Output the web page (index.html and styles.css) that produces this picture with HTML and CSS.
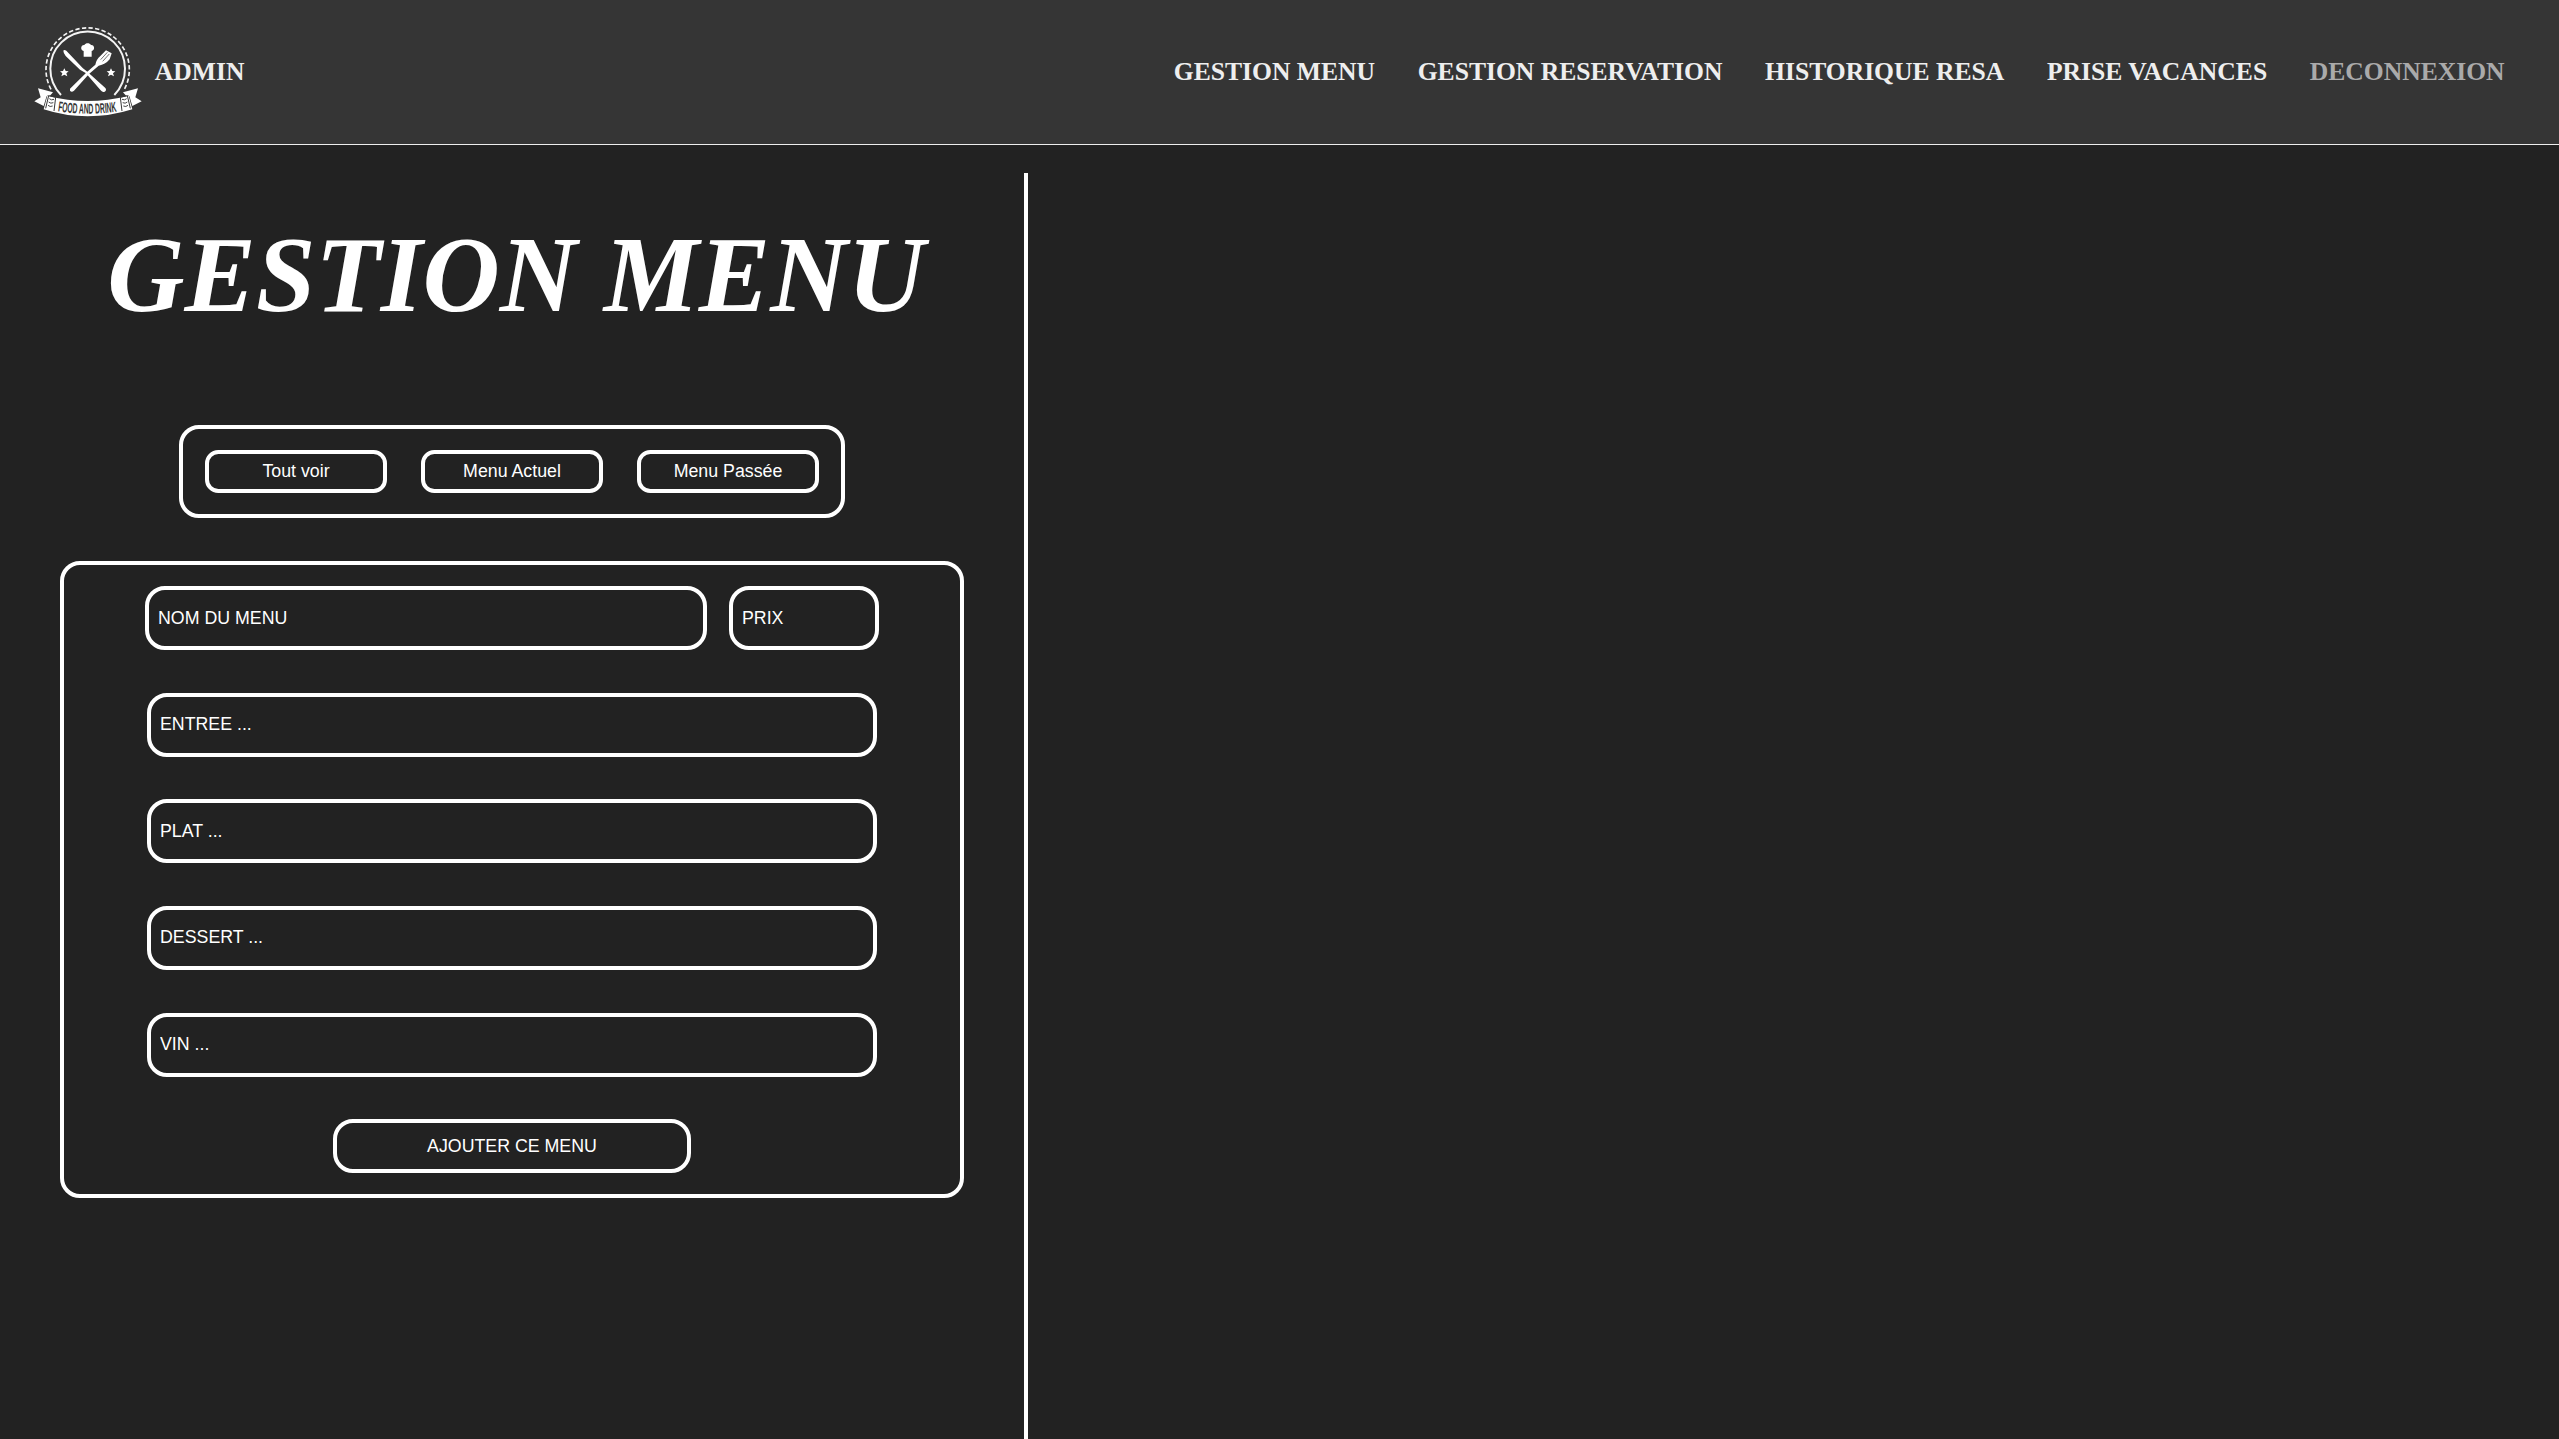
FILE: index.html
```html
<!DOCTYPE html>
<html lang="fr">
<head>
<meta charset="utf-8">
<title>Gestion menu</title>
<link rel="stylesheet" href="styles.css">
</head>
<body>
<header class="header">
  <a class="brand" href="#">
    <svg class="logo" viewBox="100 75 330 280" aria-hidden="true">
      <g fill="none" stroke="#f4f4f4">
        <path d="M154 268A125 125 0 1 1 374 268" stroke-width="5" stroke-dasharray="13 7"/>
        <path d="M184 285A112 112 0 1 1 344 285" stroke-width="6"/>
      </g>
      <g fill="#fff">
        <path d="M252 170V153C241 150 243 134 254 135C258 128 270 128 274 135C285 134 287 150 276 153V170Z"/>
        <path d="M194 205l4 8 9 1-7 6 3 9-9-5-9 5 3-9-7-6 9-1zM334 205l4 8 9 1-7 6 3 9-9-5-9 5 3-9-7-6 9-1z"/>
        <path d="M191 152Q193 148 200 152L249 204L263 215L317 264Q322 271 315 275Q309 278 303 271L258 219L241 209L198 168Q191 159 191 152Z"/>
        <path d="M211 266L262 216L287 194Q290 178 302 168L319 151L336 160L330 178Q317 194 297 197L268 222L223 272Q216 278 211 272Z"/>
      </g>
      <g fill="none" stroke="#555" stroke-width="2.5"><path d="M303 179L323 157M309 184L329 162"/></g>
      <path fill="#fff" d="M115 265L160 277L150 288Q142 284 140 291L132 318L104 304L123 292ZM415 265L370 277L380 288Q388 284 390 291L398 318L426 304L407 292Z"/>
      <path fill="#fff" d="M143 287Q204 303 264 303Q324 303 387 287L398 328Q332 349 264 349Q196 349 132 328Z"/>
      <path fill="none" stroke="#363636" stroke-width="3" d="M138 325L147 287L168 292L163 333M392 325L383 287L362 292L367 333"/>
      <path fill="none" stroke="#444" stroke-width="3" d="M149 296q6 6 14 2M147 306q6 6 14 2M145 316q6 6 14 2M381 296q-6 6-14 2M383 306q-6 6-14 2M385 316q-6 6-14 2"/>
      <path id="ribbon" fill="none" d="M174 334Q264 348 356 334"/>
      <text class="logo-text"><textPath href="#ribbon" textLength="178" lengthAdjust="spacingAndGlyphs">FOOD AND DRINK</textPath></text>
    </svg>
    <span>ADMIN</span>
  </a>
  <nav class="nav">
    <a href="#">GESTION MENU</a>
    <a href="#">GESTION RESERVATION</a>
    <a href="#">HISTORIQUE RESA</a>
    <a href="#">PRISE VACANCES</a>
    <a class="logout" href="#">DECONNEXION</a>
  </nav>
</header>
<main class="main">
  <section class="panel">
    <h1 class="title">GESTION MENU</h1>
    <div class="filters">
      <button class="filter">Tout voir</button>
      <button class="filter">Menu Actuel</button>
      <button class="filter">Menu Passée</button>
    </div>
    <form class="form">
      <div class="row">
        <input class="field name" placeholder="NOM DU MENU">
        <input class="field price" placeholder="PRIX">
      </div>
      <input class="field" placeholder="ENTREE ...">
      <input class="field" placeholder="PLAT ...">
      <input class="field" placeholder="DESSERT ...">
      <input class="field" placeholder="VIN ...">
      <button class="submit" type="button">AJOUTER CE MENU</button>
    </form>
  </section>
  <section class="results"></section>
</main>
</body>
</html>
```
FILE: styles.css
```css
* { box-sizing: border-box; }

body {
  margin: 0;
  height: 100vh;
  display: flex;
  flex-direction: column;
  overflow: hidden;
  background: #222;
  color: #fff;
  font-family: "Liberation Serif", "Times New Roman", serif;
}

.header {
  flex: none;
  height: 145px;
  display: flex;
  align-items: center;
  justify-content: space-between;
  padding: 0 54.4px 0 33.3px;
  background: #353535;
  border-bottom: 1px solid #eee;
  font-size: 25.6px;
  font-weight: bold;
}

.header a { color: #eee; text-decoration: none; }
.brand { display: flex; align-items: center; gap: 11.5px; }
.logo { width: 110px; height: 93.33px; }
.logo-text { font: bold 43px "Liberation Sans Narrow", "Liberation Sans", sans-serif; fill: #333; }
.nav { display: flex; gap: 42.67px; }
.header .logout { color: #aaa; }

.main { flex: 1; display: flex; padding-top: 28px; min-height: 0; }

.panel {
  width: 1028px;
  display: flex;
  flex-direction: column;
  align-items: center;
  border-right: 4px solid #fff;
}

.results { flex: 1; }

.title {
  margin: 41px 0 88px;
  padding-left: 8px;
  font-size: 107px;
  line-height: 123px;
  font-style: italic;
}

.filters {
  width: 666px;
  height: 93px;
  display: flex;
  align-items: center;
  justify-content: center;
  gap: 34px;
  border: 4px solid #fff;
  border-radius: 20px;
}

.filter, .field, .submit {
  border: 4px solid #fff;
  background: transparent;
  color: #fff;
  font: 17.78px "Liberation Sans", Arial, sans-serif;
}

.filter { width: 182px; height: 43px; padding: 0; border-radius: 13.33px; }

.form {
  width: 904px;
  height: 637px;
  margin-top: 43px;
  padding-top: 21px;
  display: flex;
  flex-direction: column;
  align-items: center;
  gap: 42.67px;
  border: 4px solid #fff;
  border-radius: 20px;
}

.row { display: flex; gap: 22px; }
.field { width: 730px; height: 64px; padding: 0 9px; border-radius: 20px; }
.field::placeholder { color: #fff; opacity: 1; }
.name { width: 562px; }
.price { width: 150px; }
.submit { width: 358px; height: 54px; padding: 0; border-radius: 20px; }
```
